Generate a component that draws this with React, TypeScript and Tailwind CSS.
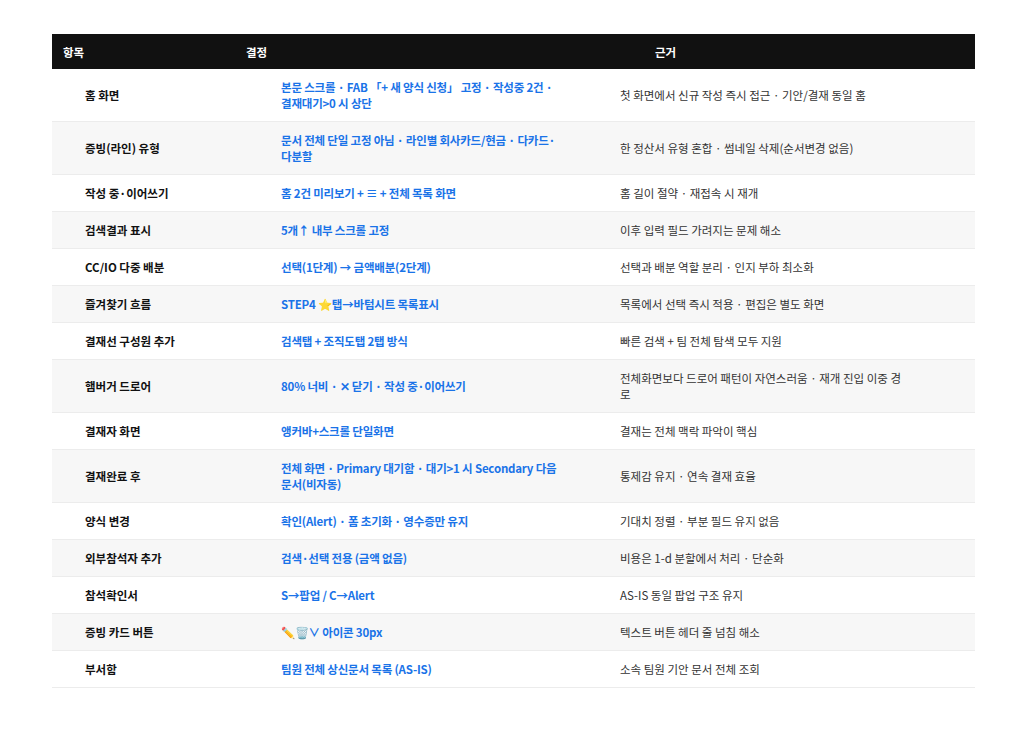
const rows: [string, string, string][] = [
  ['홈 화면', '본문 스크롤 · FAB 「+ 새 양식 신청」 고정 · 작성중 2건 · 결재대기>0 시 상단', '첫 화면에서 신규 작성 즉시 접근 · 기안/결재 동일 홈'],
  ['증빙(라인) 유형', '문서 전체 단일 고정 아님 · 라인별 회사카드/현금 · 다카드·다분할', '한 정산서 유형 혼합 · 썸네일 삭제(순서변경 없음)'],
  ['작성 중·이어쓰기', '홈 2건 미리보기 + ≡ + 전체 목록 화면', '홈 길이 절약 · 재접속 시 재개'],
  ['검색결과 표시', '5개↑ 내부 스크롤 고정', '이후 입력 필드 가려지는 문제 해소'],
  ['CC/IO 다중 배분', '선택(1단계) → 금액배분(2단계)', '선택과 배분 역할 분리 · 인지 부하 최소화'],
  ['즐겨찾기 흐름', 'STEP4 ⭐탭→바텀시트 목록표시', '목록에서 선택 즉시 적용 · 편집은 별도 화면'],
  ['결재선 구성원 추가', '검색탭 + 조직도탭 2탭 방식', '빠른 검색 + 팀 전체 탐색 모두 지원'],
  ['햄버거 드로어', '80% 너비 · ✕ 닫기 · 작성 중·이어쓰기', '전체화면보다 드로어 패턴이 자연스러움 · 재개 진입 이중 경로'],
  ['결재자 화면', '앵커바+스크롤 단일화면', '결재는 전체 맥락 파악이 핵심'],
  ['결재완료 후', '전체 화면 · Primary 대기함 · 대기>1 시 Secondary 다음 문서(비자동)', '통제감 유지 · 연속 결재 효율'],
  ['양식 변경', '확인(Alert) · 폼 초기화 · 영수증만 유지', '기대치 정렬 · 부분 필드 유지 없음'],
  ['외부참석자 추가', '검색·선택 전용 (금액 없음)', '비용은 1-d 분할에서 처리 · 단순화'],
  ['참석확인서', 'S→팝업 / C→Alert', 'AS-IS 동일 팝업 구조 유지'],
  ['증빙 카드 버튼', '✏️🗑️∨ 아이콘 30px', '텍스트 버튼 헤더 줄 넘침 해소'],
  ['부서함', '팀원 전체 상신문서 목록 (AS-IS)', '소속 팀원 기안 문서 전체 조회'],
]

export default function App() {
  return (
    <div className="w-[1024px] h-[738px] bg-white pt-[34px] pl-[52px]" style={{ fontFamily: '"Noto Sans CJK KR", "Noto Sans", sans-serif' }}>
      <div className="w-[923px] text-[11.5px] leading-[16px]">
        <div className="grid grid-cols-[194px_339px_390px] bg-[#111111] text-white font-bold h-[35px] items-center">
          <div className="pl-[11px]">항목</div>
          <div>결정</div>
          <div className="pl-[70px]">근거</div>
        </div>
        {rows.map(([a, b, c], i) => (
          <div
            key={a}
            className={`grid grid-cols-[194px_339px_390px] items-center py-[10px] border-b border-[#ececec] ${i % 2 === 1 ? 'bg-[#f7f7f7]' : 'bg-white'}`}
          >
            <div className="pl-[33px] font-bold text-[#111]">{a}</div>
            <div className="pl-[35px] pr-[20px] font-bold text-[#1a73e8] tracking-[-0.2px]">{b}</div>
            <div className="pl-[35px] pr-[68px] text-[#333]">{c}</div>
          </div>
        ))}
      </div>
    </div>
  )
}
